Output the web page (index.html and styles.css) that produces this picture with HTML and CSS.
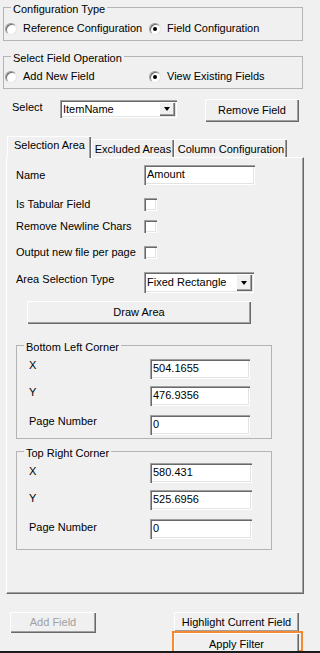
FILE: index.html
```html
<!DOCTYPE html>
<html>
<head>
<meta charset="utf-8">
<link rel="stylesheet" href="styles.css">
</head>
<body>
<div class="app">
  <div class="group g1">
    <div class="gtitle"><span>Configuration Type</span></div>
    <div class="radios r1">
      <div class="radio first"><i class="rb"></i>Reference Configuration</div>
      <div class="radio"><i class="rb on"></i>Field Configuration</div>
    </div>
  </div>

  <div class="group g2">
    <div class="gtitle"><span>Select Field Operation</span></div>
    <div class="radios r2">
      <div class="radio first"><i class="rb"></i>Add New Field</div>
      <div class="radio"><i class="rb on"></i>View Existing Fields</div>
    </div>
  </div>

  <div class="select-row">
    <div class="select-label">Select</div>
    <div class="combo combo-item"><span class="combo-text">ItemName</span><span class="drop"><i class="tri"></i></span></div>
    <div class="btn btn-remove">Remove Field</div>
  </div>

  <div class="tabs">
    <div class="tab active">Selection Area</div>
    <div class="tab t2">Excluded Areas</div>
    <div class="tab t3">Column Configuration</div>
  </div>

  <div class="panel">
    <div class="frow row-name">
      <div class="flabel">Name</div>
      <div class="tbox w-name">Amount</div>
    </div>
    <div class="frow cbrow row-tab">
      <div class="flabel">Is Tabular Field</div>
      <i class="cb"></i>
    </div>
    <div class="frow cbrow row-nl">
      <div class="flabel">Remove Newline Chars</div>
      <i class="cb"></i>
    </div>
    <div class="frow cbrow row-out">
      <div class="flabel">Output new file per page</div>
      <i class="cb"></i>
    </div>
    <div class="frow row-area">
      <div class="flabel lab-area">Area Selection Type</div>
      <div class="combo combo-area"><span class="combo-text">Fixed Rectangle</span><span class="drop"><i class="tri"></i></span></div>
    </div>
    <div class="btn btn-draw">Draw Area</div>

    <div class="group corner bl">
      <div class="gtitle"><span>Bottom Left Corner</span></div>
      <div class="crow c1"><div class="clabel">X</div><div class="tbox w-bl">504.1655</div></div>
      <div class="crow c2"><div class="clabel">Y</div><div class="tbox w-bl">476.9356</div></div>
      <div class="crow c3"><div class="clabel">Page Number</div><div class="tbox w-bl">0</div></div>
    </div>

    <div class="group corner tr">
      <div class="gtitle"><span>Top Right Corner</span></div>
      <div class="crow c1"><div class="clabel">X</div><div class="tbox w-tr">580.431</div></div>
      <div class="crow c2"><div class="clabel">Y</div><div class="tbox w-tr">525.6956</div></div>
      <div class="crow c3"><div class="clabel">Page Number</div><div class="tbox w-tr">0</div></div>
    </div>
  </div>

  <div class="bottom">
    <div class="btn btn-add disabled">Add Field</div>
    <div class="right-col">
      <div class="btn btn-hl">Highlight Current Field</div>
      <div class="focus-box">
        <div class="btn btn-apply">Apply Filter</div>
      </div>
    </div>
  </div>
</div>
<div class="band"></div>
</body>
</html>
```

FILE: styles.css
```css
* { box-sizing: border-box; margin: 0; padding: 0; }
html, body { width: 320px; height: 653px; overflow: hidden; }
body {
  background: #f0f0f0;
  font-family: "Liberation Sans", Arial, sans-serif;
  font-size: 11px;
  line-height: 13px;
  color: #000;
}
.app { height: 651px; overflow: hidden; }
.band { height: 2px; background: #1c1c1c; }

/* group boxes */
.group { border: 1px solid #b4b4b4; }
.gtitle { margin-top: -5px; height: 13px; padding-left: 7px; white-space: nowrap; }
.gtitle span { background: #f0f0f0; padding: 0 2px; }

.g1 { margin: 7px 0 0 3px; width: 300px; padding-bottom: 5px; }
.g2 { margin: 15px 0 0 3px; width: 300px; padding-bottom: 5px; }
.radios { display: flex; align-items: center; height: 13px; padding-left: 1px; }
.r1 { margin-top: 6px; }
.r2 { margin-top: 5px; }
.radio { display: flex; align-items: center; gap: 6px; white-space: nowrap; }
.radio.first { width: 144px; }
.rb {
  display: block; width: 12px; height: 12px; border-radius: 50%;
  background: #fff;
  border: 1px solid;
  border-color: #9a9a9a #e6e6e6 #e6e6e6 #9a9a9a;
  box-shadow: inset 1px 1px 0 #6e6e6e;
  position: relative;
}
.rb.on::after {
  content: ""; position: absolute; left: 3px; top: 3px;
  width: 4px; height: 4px; border-radius: 50%; background: #000;
}

/* select row */
.select-row { display: flex; align-items: flex-start; margin-top: 10px; padding-left: 12px; height: 23px; }
.select-label { width: 48px; margin-top: 2px; }

/* sunken boxes */
.tbox, .combo, .cb {
  background: #fff;
  box-shadow: inset 1px 1px 0 #a0a0a0, inset 2px 2px 0 #696969, inset -1px -1px 0 #fff, inset -2px -2px 0 #e3e3e3;
}
.tbox { height: 20px; padding: 3px 0 0 3px; white-space: nowrap; }
.combo { display: flex; align-items: stretch; padding: 2px 2px 2px 3px; }
.combo-text { flex: 1; white-space: nowrap; display: flex; align-items: center; }
.combo-item { width: 117px; height: 18px; margin-top: 1px; }
.drop {
  width: 16px; background: #f0f0f0; display: flex; align-items: center; justify-content: center;
  box-shadow: inset 1px 1px 0 #fff, inset -1px -1px 0 #696969, inset -2px -2px 0 #a0a0a0;
}
.tri { display: block; width: 0; height: 0; border-left: 3.5px solid transparent; border-right: 3.5px solid transparent; border-top: 4px solid #000; }

/* buttons */
.btn {
  background: #f0f0f0; text-align: center; white-space: nowrap;
  box-shadow: inset 1px 1px 0 #fff, inset -1px -1px 0 #696969, inset -2px -2px 0 #a0a0a0;
  display: flex; align-items: center; justify-content: center;
}
.btn-remove { width: 94px; height: 23px; margin-left: 28px; }
.disabled { color: #a0a0a0; }

/* tabs */
.tabs { display: flex; align-items: flex-end; margin-top: 14px; padding-left: 7px; height: 22px; margin-bottom: -1px; position: relative; z-index: 1; }
.tab {
  height: 18px; margin-bottom: 1px; padding-top: 3px; text-align: center; white-space: nowrap;
  border-top: 1px solid #fff; border-left: 1px solid #fff;
  box-shadow: inset -1px 0 0 #696969, inset -2px 0 0 #a0a0a0;
}
.tab.active { width: 84px; height: 22px; margin-bottom: 0; padding-top: 2px; background: #f0f0f0; }
.t2 { width: 83px; }
.t3 { width: 113px; }

.panel {
  margin-left: 6px; width: 298px; height: 437px;
  border-top: 1px solid #fff; border-left: 1px solid #fff;
  border-right: 1px solid #696969; border-bottom: 1px solid #696969;
  box-shadow: inset -1px -1px 0 #a0a0a0;
  padding: 7px 0 0 9px;
}
.frow { display: flex; align-items: center; height: 20px; }
.flabel { width: 128px; white-space: nowrap; }
.cbrow { height: 19px; }
.cb { display: block; width: 13px; height: 13px; }
.w-name { width: 111px; }
.row-tab { margin-top: 10px; }
.row-nl { margin-top: 3px; }
.row-out { margin-top: 7px; }
.row-area { margin-top: 10px; height: 21px; align-items: flex-start; }
.lab-area { margin-top: 1px; }
.combo-area { width: 110px; height: 21px; }
.btn-draw { width: 224px; height: 23px; margin: 8px 0 0 11px; }

.corner { width: 256px; padding-left: 12px; }
.bl { margin-top: 21px; padding-bottom: 3px; }
.tr { margin-top: 12px; padding-bottom: 10px; }
.corner .gtitle { margin-left: -12px; }
.crow { display: flex; align-items: flex-start; }
.clabel { width: 121px; white-space: nowrap; }
.tr .clabel { padding-top: 2px; }
.bl .c1 { margin-top: 5px; }
.tr .c1 { margin-top: 3px; }
.c2 { margin-top: 7px; }
.c3 { margin-top: 9px; }
.w-bl { width: 100px; }
.w-tr { width: 102px; }

/* bottom */
.bottom { display: flex; align-items: flex-start; margin-top: 18px; padding-left: 10px; }
.btn-add { width: 86px; height: 21px; }
.right-col { margin-left: 76px; }
.btn-hl { width: 125px; height: 20px; margin-left: 2px; }
.focus-box { margin-top: -1px; width: 131px; height: 21px; border: 2px solid #f58a33; border-bottom-width: 2px; }
.btn-apply { width: 125px; height: 22px; }
```
